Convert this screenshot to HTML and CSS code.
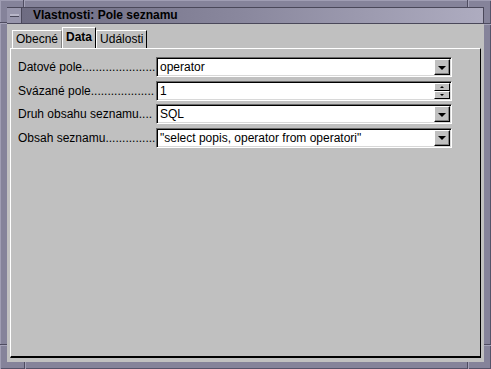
FILE: index.html
```html
<!DOCTYPE html>
<html lang="cs">
<head>
    <meta charset="UTF-8"/>
    <title>Vlastnosti: Pole seznamu</title>
    <link rel="stylesheet" href="styles.css">
</head>
<body>
<div class="window">
    <!-- zářezy v rámu okna -->
    <div class="notch notch-v" style="left:23px;top:0"></div>
    <div class="notch notch-v" style="left:467px;top:0"></div>
    <div class="notch notch-h" style="left:0;top:22px"></div>
    <div class="notch notch-h" style="left:484px;top:23px"></div>
    <div class="notch notch-h" style="left:0;top:344px"></div>
    <div class="notch notch-h" style="left:484px;top:344px"></div>
    <div class="notch notch-v" style="left:24px;top:362px"></div>
    <div class="notch notch-v" style="left:467px;top:362px"></div>

    <div class="titlebar">
        <span class="menu-btn"><span class="menu-bar"></span></span>
        <span class="title">Vlastnosti: Pole seznamu</span>
    </div>

    <div class="client">
        <div class="tabs">
            <div class="tab">Obecné</div>
            <div class="tab active">Data</div>
            <div class="tab last">Události</div>
        </div>
        <div class="panel">
            <div class="row">
                <div class="label">Datové pole......................</div>
                <div class="field">
                    <span class="value">operator</span>
                    <span class="drop"><span class="arrow-down"></span></span>
                </div>
            </div>
            <div class="row">
                <div class="label">Svázané pole...................</div>
                <div class="field">
                    <span class="value">1</span>
                    <span class="spin">
                        <span class="spin-btn"><span class="arrow-up-sm"></span></span>
                        <span class="spin-btn"><span class="arrow-down-sm"></span></span>
                    </span>
                </div>
            </div>
            <div class="row">
                <div class="label">Druh obsahu seznamu....</div>
                <div class="field">
                    <span class="value">SQL</span>
                    <span class="drop"><span class="arrow-down"></span></span>
                </div>
            </div>
            <div class="row">
                <div class="label">Obsah seznamu...............</div>
                <div class="field">
                    <span class="value">"select popis, operator from operatori"</span>
                    <span class="drop"><span class="arrow-down"></span></span>
                </div>
            </div>
        </div>
    </div>
</div>
</body>
</html>
```

FILE: styles.css
```css
body {
    margin: 0;
    font-family: "Liberation Sans", Arial, sans-serif;
    font-size: 12px;
    color: #000;
}

.window {
    position: relative;
    box-sizing: border-box;
    width: 491px;
    height: 369px;
    padding: 7px;
    display: flex;
    flex-direction: column;
    background: #85839a;
    box-shadow: inset 1px 1px #9f9db3, inset -1px -1px #55536a;
}

/* zářezy rámu */
.notch {
    position: absolute;
}
.notch-v {
    width: 1px;
    height: 7px;
    background: #4e4c60;
    border-right: 1px solid #a4a2b8;
}
.notch-h {
    width: 7px;
    height: 1px;
    background: #4e4c60;
    border-bottom: 1px solid #a4a2b8;
}

.titlebar {
    box-sizing: border-box;
    height: 17px;
    display: flex;
    align-items: center;
    background: linear-gradient(to right, #6c6a80, #8a889e 50%, #aeacc0);
    border-top: 1px solid #4a485a;
    border-bottom: 1px solid #4a485a;
    border-right: 1px solid #4a485a;
}

.menu-btn {
    box-sizing: border-box;
    width: 15px;
    height: 15px;
    display: flex;
    align-items: center;
    justify-content: center;
    background: #9896ac;
    border-right: 1px solid #4a485a;
}
.menu-bar {
    width: 9px;
    height: 2px;
    background: #b8b6c8;
    border-bottom: 1px solid #4a485a;
}

.title {
    margin-left: 11px;
    font-weight: bold;
    line-height: 15px;
}

.client {
    flex: 1;
    display: flex;
    flex-direction: column;
    padding: 3px 3px 4px 3px;
    background: #c0c0c0;
}

.tabs {
    display: flex;
    align-items: flex-end;
    height: 21px;
    padding-left: 2px;
}

.tab {
    box-sizing: border-box;
    height: 18px;
    line-height: 17px;
    padding: 0 3px 0 3px;
    border-left: 1px solid #fff;
    border-top: 1px solid #fff;
    border-right: 1px solid #808080;
}
.tab.active {
    height: 21px;
    line-height: 19px;
    font-weight: bold;
    border-right: 1px solid #000;
}
.tab.last {
    border-right: 1px solid #000;
}

.panel {
    flex: 1;
    padding: 8px 7px;
    border-top: 1px solid #fff;
    border-left: 1px solid #fff;
    border-right: 1px solid #000;
    border-bottom: 2px solid #000;
    display: flex;
    flex-direction: column;
    gap: 3.6px;
}

.row {
    display: flex;
    align-items: center;
    height: 20px;
}

.label {
    width: 138px;
    white-space: nowrap;
}

.field {
    box-sizing: border-box;
    width: 296px;
    height: 20px;
    display: flex;
    align-items: stretch;
    background: #fff;
    border: 1px solid;
    border-color: #6a6a6a #fff #fff #6a6a6a;
    box-shadow: inset 1px 1px #000, inset -1px -1px #d8d8d8;
    padding: 1px;
}

.value {
    flex: 1;
    padding-left: 2px;
    line-height: 16px;
    white-space: nowrap;
}

.drop {
    box-sizing: border-box;
    width: 16px;
    display: flex;
    align-items: center;
    justify-content: center;
    background: #c0c0c0;
    border-top: 1px solid #fff;
    border-left: 1px solid #fff;
    border-right: 1px solid #000;
    border-bottom: 1px solid #000;
    box-shadow: inset -1px -1px #808080;
}

.arrow-down {
    width: 0;
    height: 0;
    border-left: 4px solid transparent;
    border-right: 4px solid transparent;
    border-top: 4px solid #000;
    margin-top: 1px;
}

.spin {
    width: 16px;
    display: flex;
    flex-direction: column;
}
.spin-btn {
    box-sizing: border-box;
    flex: 1;
    display: flex;
    align-items: center;
    justify-content: center;
    background: #c0c0c0;
    border-top: 1px solid #fff;
    border-left: 1px solid #fff;
    border-right: 1px solid #000;
    border-bottom: 1px solid #000;
}
.arrow-up-sm {
    width: 0;
    height: 0;
    border-left: 2px solid transparent;
    border-right: 2px solid transparent;
    border-bottom: 2px solid #000;
}
.arrow-down-sm {
    width: 0;
    height: 0;
    border-left: 2px solid transparent;
    border-right: 2px solid transparent;
    border-top: 2px solid #000;
}
```
